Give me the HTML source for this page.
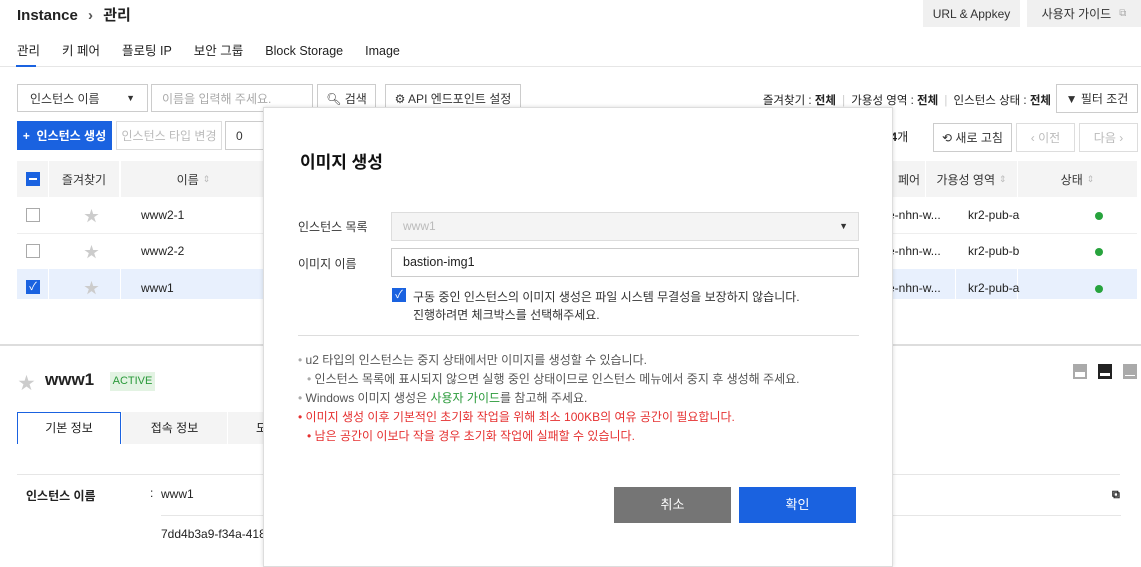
<!DOCTYPE html>
<html><head><meta charset="utf-8"><style>
*{box-sizing:border-box;margin:0;padding:0}
body{width:1141px;height:541px;overflow:hidden;background:#fff;font-family:"Liberation Sans","Noto Sans CJK KR",sans-serif;color:#222;position:relative;font-size:12px}
.a{position:absolute;white-space:nowrap}
.btn{position:absolute;border:1px solid #ccc;background:#fff;display:flex;align-items:center;justify-content:center;font-size:12px;color:#333;white-space:nowrap}
.th{position:absolute;top:161px;height:36px;background:#f4f4f4;display:flex;align-items:center;justify-content:center;font-size:12px;color:#333;white-space:nowrap}
.cb{position:absolute;width:14px;height:14px;border:1px solid #aaa;background:#fff}
.cbon{background:#1a62e0;border-color:#1a62e0}
.star{position:absolute;color:#ccc;font-size:15px}
.cell{position:absolute;font-size:12px;color:#222}
.dot{position:absolute;width:8px;height:8px;border-radius:50%;background:#27a33d}
.sort{color:#bbb;font-size:9px;margin-left:4px}
</style></head><body>
<div class="a" style="left:17px;top:4px;font-size:15px;font-weight:bold">Instance <span style="color:#555;margin:0 6px">›</span> 관리</div>
<div class="btn" style="left:923px;top:0;width:97px;height:27px;background:#f0f0f0;border:none">URL &amp; Appkey</div>
<div class="btn" style="left:1027px;top:0;width:114px;height:27px;background:#f0f0f0;border:none">사용자 가이드 <span style="color:#aaa;margin-left:8px;font-size:10px">⧉</span></div>
<div class="a" style="left:17px;top:40px;font-size:12.5px">
<span>관리</span><span style="margin-left:22px">키 페어</span><span style="margin-left:22px">플로팅 IP</span><span style="margin-left:22px">보안 그룹</span><span style="margin-left:22px">Block Storage</span><span style="margin-left:22px">Image</span></div>
<div class="a" style="left:0;top:66px;width:1141px;height:1px;background:#e6e6e6"></div>
<div class="a" style="left:16px;top:65px;width:20px;height:2px;background:#1a62e0"></div>

<div class="btn" style="left:17px;top:84px;width:131px;height:28px;justify-content:space-between;padding:0 12px">인스턴스 이름<span style="font-size:9px">▼</span></div>
<div class="btn" style="left:151px;top:84px;width:162px;height:28px;justify-content:flex-start;padding-left:10px;color:#aaa">이름을 입력해 주세요.</div>
<div class="btn" style="left:317px;top:84px;width:59px;height:28px">🔍︎ 검색</div>
<div class="btn" style="left:385px;top:84px;width:136px;height:28px">⚙ API 엔드포인트 설정</div>
<div class="a" style="right:90px;top:92px;font-size:11.5px">즐겨찾기 : <b>전체</b> <span style="color:#ccc;margin:0 3px">|</span> 가용성 영역 : <b>전체</b> <span style="color:#ccc;margin:0 3px">|</span> 인스턴스 상태 : <b>전체</b></div>
<div class="btn" style="left:1056px;top:84px;width:82px;height:29px">▼ 필터 조건</div>

<div class="btn" style="left:17px;top:121px;width:95px;height:29px;background:#1a62e0;border-color:#1a62e0;color:#fff;font-weight:bold">+ &nbsp;인스턴스 생성</div>
<div class="btn" style="left:116px;top:121px;width:106px;height:29px;color:#bbb;border-color:#ddd">인스턴스 타입 변경</div>
<div class="btn" style="left:225px;top:121px;width:40px;height:29px;border-color:#ccc;justify-content:flex-start;padding-left:10px">0</div>
<div class="a" style="left:876px;top:128px">총 <b>4</b>개</div>
<div class="btn" style="left:933px;top:123px;width:79px;height:29px">⟲ 새로 고침</div>
<div class="btn" style="left:1016px;top:123px;width:59px;height:29px;color:#bbb;border-color:#ddd">‹ 이전</div>
<div class="btn" style="left:1079px;top:123px;width:59px;height:29px;color:#bbb;border-color:#ddd">다음 ›</div>

<div class="th" style="left:17px;width:31px"><div style="width:14px;height:14px;background:#1a62e0;position:relative"><div style="position:absolute;left:3px;top:6px;width:8px;height:2px;background:#fff"></div></div></div>
<div class="th" style="left:49px;width:70px">즐겨찾기</div>
<div class="th" style="left:121px;width:145px">이름<span class="sort">⇕</span></div>
<div class="th" style="left:880px;width:45px;justify-content:flex-start;padding-left:18px">페어<span class="sort">⇕</span></div>
<div class="th" style="left:926px;width:91px">가용성 영역<span class="sort">⇕</span></div>
<div class="th" style="left:1018px;width:119px">상태<span class="sort">⇕</span></div>

<div class="a" style="left:17px;top:233px;width:1120px;height:1px;background:#eee"></div>
<div class="a" style="left:17px;top:269px;width:1120px;height:30px;background:#e8f0fd"></div>
<div class="a" style="left:48px;top:269px;width:1px;height:30px;background:#fff"></div>
<div class="a" style="left:120px;top:269px;width:1px;height:30px;background:#fff"></div>
<div class="a" style="left:1017px;top:269px;width:1px;height:30px;background:#fff"></div>
<div class="a" style="left:955px;top:269px;width:1px;height:30px;background:#fff"></div>

<div class="cb" style="left:26px;top:208px"></div>
<div class="cb" style="left:26px;top:244px"></div>
<div class="cb cbon" style="left:26px;top:280px;color:#fff;font-size:11px;line-height:12px;text-align:center">✓</div>
<div class="star" style="left:84px;top:205px">★</div>
<div class="star" style="left:84px;top:241px">★</div>
<div class="star" style="left:84px;top:277px">★</div>
<div class="cell" style="left:141px;top:208px">www2-1</div>
<div class="cell" style="left:141px;top:244px">www2-2</div>
<div class="cell" style="left:141px;top:281px">www1</div>
<div class="cell" style="left:888px;top:208px">e-nhn-w...</div>
<div class="cell" style="left:888px;top:244px">e-nhn-w...</div>
<div class="cell" style="left:888px;top:281px">e-nhn-w...</div>
<div class="cell" style="left:968px;top:208px">kr2-pub-a</div>
<div class="cell" style="left:968px;top:244px">kr2-pub-b</div>
<div class="cell" style="left:968px;top:281px">kr2-pub-a</div>
<div class="dot" style="left:1095px;top:212px"></div>
<div class="dot" style="left:1095px;top:248px"></div>
<div class="dot" style="left:1095px;top:285px"></div>

<div class="a" style="left:0;top:344px;width:1141px;height:2px;background:#ddd"></div>
<div class="star" style="left:18px;top:369px;font-size:17px">★</div>
<div class="a" style="left:45px;top:370px;font-size:17px;font-weight:bold">www1</div>
<div class="a" style="left:110px;top:372px;width:45px;height:19px;background:#e3f3e3;color:#2a9a3a;font-size:11px;text-align:center;line-height:19px">ACTIVE</div>
<div class="a" style="left:1073px;top:364px;width:14px;height:15px;background:#aaa"><div style="position:absolute;left:2px;top:8px;width:10px;height:5px;background:#fff"></div></div>
<div class="a" style="left:1098px;top:364px;width:14px;height:15px;background:#222"><div style="position:absolute;left:2px;top:9px;width:10px;height:3px;background:#fff"></div></div>
<div class="a" style="left:1123px;top:364px;width:14px;height:15px;background:#aaa"><div style="position:absolute;left:2px;top:11px;width:10px;height:1px;background:#fff"></div></div>

<div class="a" style="left:17px;top:412px;width:104px;height:32px;border:1px solid #1a62e0;border-bottom:none;text-align:center;line-height:30px">기본 정보</div>
<div class="a" style="left:122px;top:412px;width:105px;height:32px;background:#f4f4f4;text-align:center;line-height:32px">접속 정보</div>
<div class="a" style="left:228px;top:412px;width:40px;height:32px;background:#f4f4f4;padding-left:28px;line-height:32px">도</div>
<div class="a" style="left:17px;top:474px;width:1103px;height:1px;background:#e6e6e6"></div>
<div class="a" style="left:26px;top:487px;font-weight:bold">인스턴스 이름</div>
<div class="a" style="left:150px;top:486px">:</div>
<div class="a" style="left:161px;top:487px">www1</div>
<div class="a" style="left:1112px;top:489px;font-size:11px;font-weight:bold">⧉</div>
<div class="a" style="left:161px;top:515px;width:960px;height:1px;background:#e6e6e6"></div>
<div class="a" style="left:161px;top:527px">7dd4b3a9-f34a-418</div>

<!-- modal -->
<div class="a" style="left:263px;top:107px;width:630px;height:460px;background:#fff;border:1px solid #ddd;box-shadow:0 0 4px rgba(0,0,0,.15)">
<div class="a" style="left:36px;top:40px;font-size:17px;font-weight:bold;color:#111">이미지 생성</div>
<div class="a" style="left:34px;top:110px;color:#333">인스턴스 목록</div>
<div class="a" style="left:127px;top:104px;width:468px;height:29px;background:#f4f4f4;border:1px solid #ddd;padding-left:11px;line-height:27px;color:#bbb">www1<span style="position:absolute;right:10px;color:#333;font-size:9px">▼</span></div>
<div class="a" style="left:34px;top:147px;color:#333">이미지 이름</div>
<div class="a" style="left:127px;top:140px;width:468px;height:29px;border:1px solid #ccc;padding-left:11px;line-height:27px;font-size:12.5px">bastion-img1</div>
<div class="a" style="left:128px;top:180px;width:14px;height:14px;background:#1a62e0;color:#fff;font-size:11px;text-align:center;line-height:14px">✓</div>
<div class="a" style="left:149px;top:180px;line-height:18px;color:#333">구동 중인 인스턴스의 이미지 생성은 파일 시스템 무결성을 보장하지 않습니다.<br>진행하려면 체크박스를 선택해주세요.</div>
<div class="a" style="left:34px;top:227px;width:561px;height:1px;background:#ddd"></div>
<div class="a" style="left:34px;top:243px;line-height:19px;font-size:12px;color:#555">
<div><span style="color:#aaa">•</span> u2 타입의 인스턴스는 중지 상태에서만 이미지를 생성할 수 있습니다.</div>
<div style="padding-left:9px"><span style="color:#aaa">•</span> 인스턴스 목록에 표시되지 않으면 실행 중인 상태이므로 인스턴스 메뉴에서 중지 후 생성해 주세요.</div>
<div><span style="color:#aaa">•</span> Windows 이미지 생성은 <span style="color:#2a9a3a">사용자 가이드</span>를 참고해 주세요.</div>
<div style="color:#e53030">• 이미지 생성 이후 기본적인 초기화 작업을 위해 최소 100KB의 여유 공간이 필요합니다.</div>
<div style="color:#e53030;padding-left:9px">• 남은 공간이 이보다 작을 경우 초기화 작업에 실패할 수 있습니다.</div>
</div>
<div class="a" style="left:350px;top:379px;width:117px;height:36px;background:#757575;color:#fff;text-align:center;line-height:36px;font-size:13px">취소</div>
<div class="a" style="left:475px;top:379px;width:117px;height:36px;background:#1a62e0;color:#fff;text-align:center;line-height:36px;font-size:13px">확인</div>
</div>
</body></html>
